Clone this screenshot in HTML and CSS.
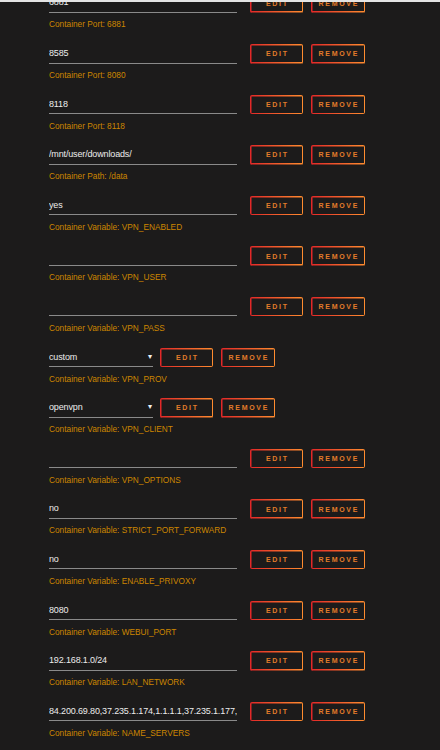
FILE: index.html
```html
<!DOCTYPE html>
<html>
<head>
<meta charset="utf-8">
<link rel="stylesheet" href="styles.css">
</head>
<body>
<div class="topbar"></div>
<div class="list">
  <div class="row"><div class="line"><div class="field">6881</div><span class="btn edit">Edit</span><span class="btn remove">Remove</span></div><div class="label">Container Port: 6881</div></div>
  <div class="row"><div class="line"><div class="field">8585</div><span class="btn edit">Edit</span><span class="btn remove">Remove</span></div><div class="label">Container Port: 8080</div></div>
  <div class="row"><div class="line"><div class="field">8118</div><span class="btn edit">Edit</span><span class="btn remove">Remove</span></div><div class="label">Container Port: 8118</div></div>
  <div class="row"><div class="line"><div class="field">/mnt/user/downloads/</div><span class="btn edit">Edit</span><span class="btn remove">Remove</span></div><div class="label">Container Path: /data</div></div>
  <div class="row"><div class="line"><div class="field">yes</div><span class="btn edit">Edit</span><span class="btn remove">Remove</span></div><div class="label">Container Variable: VPN_ENABLED</div></div>
  <div class="row"><div class="line"><div class="field"></div><span class="btn edit">Edit</span><span class="btn remove">Remove</span></div><div class="label">Container Variable: VPN_USER</div></div>
  <div class="row"><div class="line"><div class="field"></div><span class="btn edit">Edit</span><span class="btn remove">Remove</span></div><div class="label">Container Variable: VPN_PASS</div></div>
  <div class="row"><div class="line"><div class="field select"><span>custom</span><span class="arrow">▾</span></div><span class="btn edit narrow">Edit</span><span class="btn remove">Remove</span></div><div class="label">Container Variable: VPN_PROV</div></div>
  <div class="row"><div class="line"><div class="field select"><span>openvpn</span><span class="arrow">▾</span></div><span class="btn edit narrow">Edit</span><span class="btn remove">Remove</span></div><div class="label">Container Variable: VPN_CLIENT</div></div>
  <div class="row"><div class="line"><div class="field"></div><span class="btn edit">Edit</span><span class="btn remove">Remove</span></div><div class="label">Container Variable: VPN_OPTIONS</div></div>
  <div class="row"><div class="line"><div class="field">no</div><span class="btn edit">Edit</span><span class="btn remove">Remove</span></div><div class="label">Container Variable: STRICT_PORT_FORWARD</div></div>
  <div class="row"><div class="line"><div class="field">no</div><span class="btn edit">Edit</span><span class="btn remove">Remove</span></div><div class="label">Container Variable: ENABLE_PRIVOXY</div></div>
  <div class="row"><div class="line"><div class="field">8080</div><span class="btn edit">Edit</span><span class="btn remove">Remove</span></div><div class="label">Container Variable: WEBUI_PORT</div></div>
  <div class="row"><div class="line"><div class="field">192.168.1.0/24</div><span class="btn edit">Edit</span><span class="btn remove">Remove</span></div><div class="label">Container Variable: LAN_NETWORK</div></div>
  <div class="row"><div class="line"><div class="field">84.200.69.80,37.235.1.174,1.1.1.1,37.235.1.177,</div><span class="btn edit">Edit</span><span class="btn remove">Remove</span></div><div class="label">Container Variable: NAME_SERVERS</div></div>
</div>
</body>
</html>
```
FILE: styles.css
```css
html, body {
  margin: 0;
  padding: 0;
  background: #1c1b1b;
  height: 100%;
  overflow: hidden;
  font-family: "Liberation Sans", Arial, sans-serif;
}
.topbar {
  position: fixed;
  top: 0;
  left: 0;
  right: 0;
  height: 2px;
  background: #e4e4e4;
  z-index: 2;
}
.list {
  margin-top: -6.6px;
  padding-left: 49px;
}
.row {
  height: 50.6px;
  display: flex;
  flex-direction: column;
}
.line {
  display: flex;
  align-items: flex-start;
  height: 20px;
}
.field {
  box-sizing: border-box;
  width: 188px;
  height: 19.5px;
  padding-top: 3px;
  font-size: 9px;
  line-height: 12px;
  letter-spacing: -0.15px;
  color: #ececec;
  border-bottom: 1.5px solid #8a8a8a;
  white-space: nowrap;
  overflow: hidden;
  margin-right: 13px;
}
.field.select {
  width: 104px;
  margin-right: 7px;
  display: flex;
  justify-content: space-between;
  padding-right: 1px;
}
.arrow {
  font-size: 8px;
  color: #f0f0f0;
}
.btn {
  box-sizing: border-box;
  height: 19.5px;
  display: flex;
  align-items: center;
  justify-content: center;
  font-size: 7px;
  font-weight: bold;
  letter-spacing: 1.7px;
  padding-left: 1.7px;
  text-transform: uppercase;
  color: #e27c2a;
  border-radius: 2px;
  background:
    linear-gradient(90deg, #e22828, #ff8c2f) 0 0 / 100% 1.5px no-repeat,
    linear-gradient(90deg, #e22828, #ff8c2f) 0 100% / 100% 1.5px no-repeat,
    linear-gradient(#e22828, #e22828) 0 0 / 1.5px 100% no-repeat,
    linear-gradient(#ff8c2f, #ff8c2f) 100% 0 / 1.5px 100% no-repeat;
}
.edit {
  width: 53px;
  margin-right: 8px;
}
.remove {
  width: 54px;
}
.label {
  margin-top: 6px;
  font-size: 8.3px;
  line-height: 10px;
  color: #cc8600;
  white-space: nowrap;
}
```
